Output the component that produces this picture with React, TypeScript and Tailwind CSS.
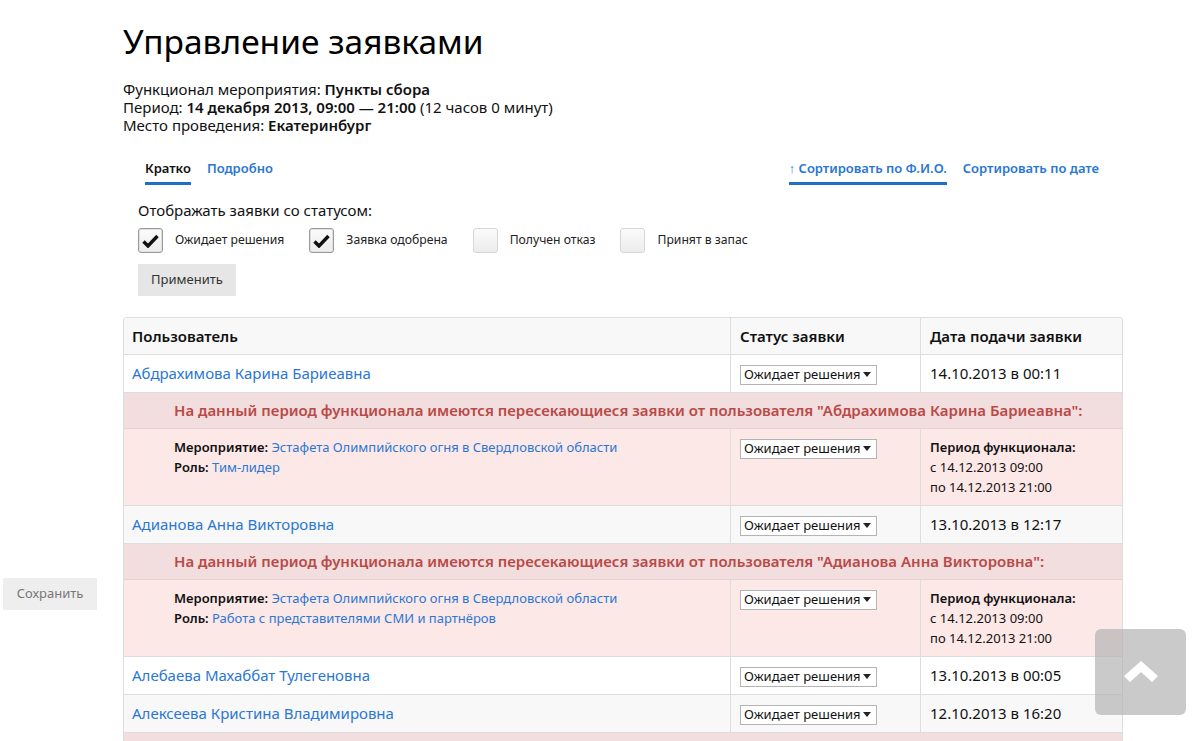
import React from "react";

const font = "font-['Segoe_UI','Noto_Sans','Open_Sans',sans-serif]";

type Conflict = {
  event: string;
  role: string;
  from: string;
  to: string;
};

type Row = {
  name: string;
  date: string;
  conflict?: Conflict;
};

const rows: Row[] = [
  {
    name: "Абдрахимова Карина Бариеавна",
    date: "14.10.2013 в 00:11",
    conflict: {
      event: "Эстафета Олимпийского огня в Свердловской области",
      role: "Тим-лидер",
      from: "с 14.12.2013 09:00",
      to: "по 14.12.2013 21:00",
    },
  },
  {
    name: "Адианова Анна Викторовна",
    date: "13.10.2013 в 12:17",
    conflict: {
      event: "Эстафета Олимпийского огня в Свердловской области",
      role: "Работа с представителями СМИ и партнёров",
      from: "с 14.12.2013 09:00",
      to: "по 14.12.2013 21:00",
    },
  },
  { name: "Алебаева Махаббат Тулегеновна", date: "13.10.2013 в 00:05" },
  {
    name: "Алексеева Кристина Владимировна",
    date: "12.10.2013 в 16:20",
    conflict: {
      event: "Эстафета Олимпийского огня в Свердловской области",
      role: "Тим-лидер",
      from: "с 14.12.2013 09:00",
      to: "по 14.12.2013 21:00",
    },
  },
];

const StatusSelect = () => (
  <div className="inline-flex h-[20px] w-[137px] items-center justify-between whitespace-nowrap border border-[#b4b4b4] bg-white pl-[3px] pr-[5px] text-[13px] leading-none text-[#111]">
    <span>Ожидает решения</span>
    <svg width="8" height="5" viewBox="0 0 8 5">
      <path d="M0 0h8L4 5z" fill="#222" />
    </svg>
  </div>
);

const Checkbox = ({ checked, label }: { checked: boolean; label: string }) => (
  <label className="flex items-center gap-[12px]">
    <span
      className={`flex h-[25px] w-[25px] items-center justify-center rounded-[3px] border bg-gradient-to-b from-[#fbfbfb] to-[#ececec] ${
        checked ? "border-[#9a9a9a] shadow-[inset_0_0_0_1px_#e0e0e0]" : "border-[#d6d6d6]"
      }`}
    >
      {checked && (
        <svg width="17" height="14" viewBox="0 0 17 14">
          <path d="M1.5 7.5l4.5 4.5L15.5 2" fill="none" stroke="#111" strokeWidth="3.4" />
        </svg>
      )}
    </span>
    <span className="text-[12.2px] text-[#222]">{label}</span>
  </label>
);

export default function App() {
  return (
    <div className={`relative min-h-[741px] overflow-hidden bg-white text-[#111] ${font}`}>
      <div className="ml-[123px] w-[1000px]">
        <h1 className="pt-[18px] text-[33.5px] font-normal leading-[46px] text-black">Управление заявками</h1>

        <div className="mt-[16px] text-[15px] leading-[18px]">
          <p>
            Функционал мероприятия: <b className="font-semibold">Пункты сбора</b>
          </p>
          <p>
            Период: <b className="font-semibold">14 декабря 2013, 09:00 — 21:00</b> (12 часов 0 минут)
          </p>
          <p>
            Место проведения: <b className="font-semibold">Екатеринбург</b>
          </p>
        </div>

        <div className="mt-[25px] flex items-start justify-between pl-[22px] pr-[24px] text-[13px] font-semibold leading-[18px]">
          <div className="flex gap-[16px]">
            <span className="border-b-[3px] border-[#1d6fc8] pb-[5px] text-[#111]">Кратко</span>
            <span className="text-[#2a77d3]">Подробно</span>
          </div>
          <div className="flex gap-[16px]">
            <span className="border-b-[3px] border-[#1d6fc8] pb-[5px] text-[#2a77d3]">↑ Сортировать по Ф.И.О.</span>
            <span className="text-[#2a77d3]">Сортировать по дате</span>
          </div>
        </div>

        <div className="ml-[15px] mt-[15px]">
          <p className="text-[15px] leading-[20px] text-[#111]">Отображать заявки со статусом:</p>
          <div className="mt-[8px] flex gap-[25px]">
            <Checkbox checked label="Ожидает решения" />
            <Checkbox checked label="Заявка одобрена" />
            <Checkbox checked={false} label="Получен отказ" />
            <Checkbox checked={false} label="Принят в запас" />
          </div>
          <button className="mt-[11px] h-[32px] w-[98px] bg-[#e6e6e6] text-[13px] text-[#333]">Применить</button>
        </div>

        <table className="mt-[21px] w-full border-separate border-spacing-0 overflow-hidden rounded-t-[4px] border-x border-t border-[#dddddd] text-[15px]">
          <thead>
            <tr className="bg-[#f8f8f8] text-left">
              <th className="h-[37px] w-[606px] border-b border-[#dddddd] px-[8px] font-semibold">Пользователь</th>
              <th className="w-[190px] border-b border-l border-[#dddddd] px-[9px] font-semibold">Статус заявки</th>
              <th className="border-b border-l border-[#dddddd] px-[9px] font-semibold">Дата подачи заявки</th>
            </tr>
          </thead>
          <tbody>
            {rows.map((r, i) => (
              <React.Fragment key={r.name}>
                <tr className={i % 2 === 0 ? "bg-white" : "bg-[#f8f8f8]"}>
                  <td className="h-[38px] border-b border-[#dddddd] px-[8px] text-[#2a77d3]">{r.name}</td>
                  <td className="border-b border-l border-[#dddddd] px-[9px] align-middle">
                    <StatusSelect />
                  </td>
                  <td className="border-b border-l border-[#dddddd] px-[9px]">{r.date}</td>
                </tr>
                {r.conflict && (
                  <>
                    <tr className="bg-[#f2dede]">
                      <td
                        colSpan={3}
                        className="h-[36px] whitespace-nowrap border-b border-[#e8d0d0] pl-[50px] font-semibold text-[#b94a48]"
                      >
                        На данный период функционала имеются пересекающиеся заявки от пользователя "{r.name}":
                      </td>
                    </tr>
                    <tr className="bg-[#fde8e8] align-top text-[13px] leading-[20px]">
                      <td className="h-[77px] border-b border-[#dddddd] pl-[50px] pt-[8px]">
                        <p>
                          <b className="font-semibold">Мероприятие:</b>{" "}
                          <span className="text-[#2a77d3]">{r.conflict.event}</span>
                        </p>
                        <p>
                          <b className="font-semibold">Роль:</b>{" "}
                          <span className="text-[#2a77d3]">{r.conflict.role}</span>
                        </p>
                      </td>
                      <td className="border-b border-l border-[#dddddd] px-[9px] pt-[9px]">
                        <StatusSelect />
                      </td>
                      <td className="border-b border-l border-[#dddddd] px-[9px] pt-[8px]">
                        <p className="font-semibold">Период функционала:</p>
                        <p>{r.conflict.from}</p>
                        <p>{r.conflict.to}</p>
                      </td>
                    </tr>
                  </>
                )}
              </React.Fragment>
            ))}
          </tbody>
        </table>
      </div>

      <button className="fixed left-[3px] top-[578px] h-[32px] w-[94px] bg-[#eeeeee] text-[13px] text-[#777]">
        Сохранить
      </button>

      <div className="fixed left-[1095px] top-[629px] flex h-[86px] w-[91px] items-center justify-center rounded-[6px] bg-[#b4b4b4]/70">
        <svg width="34" height="22" viewBox="0 0 34 22">
          <path d="M17 0L34 15l-6 6-11-10L6 21l-6-6z" fill="#fff" />
        </svg>
      </div>
    </div>
  );
}
